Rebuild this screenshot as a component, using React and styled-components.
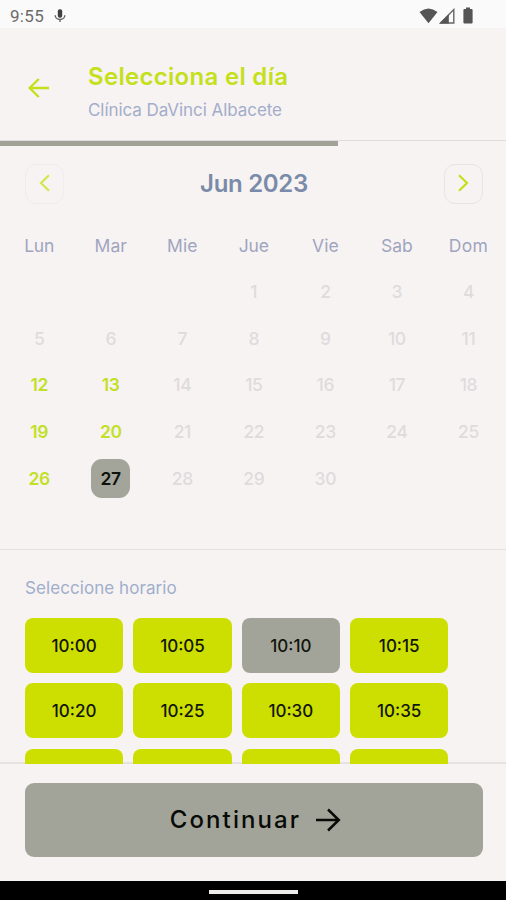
import React, { useState } from 'react';
import styled, { createGlobalStyle } from 'styled-components';

const WEEK_DAYS = [
  { label: 'Lun', spacing: -0.2 },
  { label: 'Mar', spacing: 0 },
  { label: 'Mie', spacing: 0.1 },
  { label: 'Jue', spacing: -0.1 },
  { label: 'Vie', spacing: 0 },
  { label: 'Sab', spacing: 0 },
  { label: 'Dom', spacing: 0.3 },
];
const FIRST_DAY_OFFSET = 3;
const DAYS = Array.from({ length: 30 }, (_, i) => i + 1);
const AVAILABLE_DAYS = [12, 13, 19, 20, 26, 27];
const TIMES = [
  '10:00',
  '10:05',
  '10:10',
  '10:15',
  '10:20',
  '10:25',
  '10:30',
  '10:35',
];
const NEXT_ROW = [0, 1, 2, 3];

const MicIcon = () => (
  <svg width="12" height="14" viewBox="0 0 12 14" fill="none">
    <rect x="3.8" y="0.3" width="4.4" height="8.4" rx="2" fill="#3f3f3f" />
    <path d="M1.2 6.2a4.8 4.3 0 0 0 9.6 0M6 10.5v2.6" stroke="#666" strokeWidth="1.4" />
  </svg>
);

const WifiIcon = () => (
  <svg width="19" height="16" viewBox="0 0 19 16">
    <path d="M0.5 4Q9.5-3 18.5 4L9.5 15.2Z" fill="#555" />
  </svg>
);

const SignalIcon = () => (
  <svg width="16" height="16" viewBox="0 0 16 16">
    <path d="M1.6 15 14.8 1.6V15Z" fill="none" stroke="#666" strokeWidth="1.4" />
    <path d="M0.3 15.6 9.8 6v9.6Z" fill="#555" />
  </svg>
);

const BatteryIcon = () => (
  <svg width="10" height="17" viewBox="0 0 10 17">
    <path d="M3 0.5h4V2h1.6q1 0 1 1v12.5q0 1-1 1H1.4q-1 0-1-1V3q0-1 1-1H3Z" fill="#555" />
  </svg>
);

const BackIcon = () => (
  <svg width="22" height="20" viewBox="0 0 22 20" fill="none">
    <path d="M21 10H1.8M10.8 1 1.6 10l9.2 9" stroke="#c4e01b" strokeWidth="2.4" />
  </svg>
);

const ChevronIcon = ({ next }) => (
  <svg width="12" height="18" viewBox="0 0 12 18" fill="none">
    <path
      d={next ? 'M2 1.2 10 9l-8 7.8' : 'M10 1.2 2 9l8 7.8'}
      stroke={next ? '#c2e018' : '#d0e74c'}
      strokeWidth="2.2"
    />
  </svg>
);

const ForwardIcon = () => (
  <svg width="26" height="24" viewBox="0 0 26 24" fill="none">
    <path d="M1 12h22.5M13 1.5 23.8 12 13 22.5" stroke="#080a05" strokeWidth="2.5" />
  </svg>
);

const App = () => {
  const [selectedDay, setSelectedDay] = useState(27);
  const [selectedTime, setSelectedTime] = useState('10:10');

  return (
    <Screen>
      <GlobalStyle />
      <StatusBar>
        <Clock>9:55</Clock>
        <MicIcon />
        <StatusIcons>
          <WifiIcon />
          <SignalIcon />
          <BatteryIcon />
        </StatusIcons>
      </StatusBar>
      <Header>
        <BackButton aria-label="Volver">
          <BackIcon />
        </BackButton>
        <HeaderText>
          <Title>Selecciona el día</Title>
          <Clinic>Clínica DaVinci Albacete</Clinic>
        </HeaderText>
      </Header>
      <ProgressTrack>
        <Progress />
      </ProgressTrack>
      <Calendar>
        <MonthBar>
          <MonthButton $faded aria-label="Mes anterior">
            <ChevronIcon />
          </MonthButton>
          <Month>Jun 2023</Month>
          <MonthButton aria-label="Mes siguiente">
            <ChevronIcon next />
          </MonthButton>
        </MonthBar>
        <WeekDays>
          {WEEK_DAYS.map(({ label, spacing }) => (
            <WeekDay key={label} $spacing={spacing}>
              {label}
            </WeekDay>
          ))}
        </WeekDays>
        <Days>
          {DAYS.map((day) => {
            const available = AVAILABLE_DAYS.includes(day);
            return (
              <Day
                key={day}
                $first={day === 1}
                $available={available}
                $selected={day === selectedDay}
                disabled={!available}
                onClick={() => setSelectedDay(day)}
              >
                {day}
              </Day>
            );
          })}
        </Days>
      </Calendar>
      <Schedule>
        <ScheduleTitle>Seleccione horario</ScheduleTitle>
        <Times>
          {TIMES.map((time) => (
            <Time
              key={time}
              $selected={time === selectedTime}
              onClick={() => setSelectedTime(time)}
            >
              {time}
            </Time>
          ))}
          {NEXT_ROW.map((slot) => (
            <Time key={slot} />
          ))}
        </Times>
      </Schedule>
      <Footer>
        <ContinueButton>
          <ContinueLabel>Continuar</ContinueLabel>
          <ForwardIcon />
        </ContinueButton>
      </Footer>
      <NavigationBar>
        <HomeHandle />
      </NavigationBar>
    </Screen>
  );
};

const GlobalStyle = createGlobalStyle`
  * {
    box-sizing: border-box;
  }

  body {
    margin: 0;
    background-color: #f7f3f3;
  }

  button {
    margin: 0;
    padding: 0;
    border: none;
    background: none;
    font-family: inherit;
  }
`;

const Screen = styled.div`
  display: flex;
  flex-direction: column;
  width: 506px;
  height: 900px;
  overflow: hidden;
  background-color: #f7f3f3;
  font-family: 'Inter', sans-serif;
`;

const StatusBar = styled.div`
  flex: none;
  display: flex;
  align-items: center;
  height: 28px;
  padding: 3px 33px 0 10px;
  background-color: #fafafa;
`;

const Clock = styled.span`
  width: 44px;
  font-family: 'Roboto', sans-serif;
  font-size: 17px;
  line-height: 20px;
  letter-spacing: 0.3px;
  color: #6b6b6b;
`;

const StatusIcons = styled.div`
  display: flex;
  align-items: center;
  margin-left: auto;

  svg + svg {
    margin-left: 1px;
  }

  svg:last-child {
    margin-left: 8px;
  }
`;

const Header = styled.header`
  flex: none;
  display: flex;
  height: 112px;
  padding: 34px 25px 0 28px;
`;

const BackButton = styled.button`
  display: flex;
  width: 60px;
  height: 20px;
  margin-top: 16px;
`;

const HeaderText = styled.div`
  display: flex;
  flex-direction: column;
  gap: 6px;
  white-space: nowrap;
`;

const Title = styled.h1`
  margin: 0;
  font-size: 24px;
  line-height: 30px;
  font-weight: 600;
  letter-spacing: 0.3px;
  color: #c4e01b;
`;

const Clinic = styled.span`
  font-size: 17px;
  line-height: 24px;
  letter-spacing: -0.06px;
  color: #a3adca;
`;

const ProgressTrack = styled.div`
  flex: none;
  height: 6px;
  border-top: 1px solid #dfdcdb;
`;

const Progress = styled.div`
  width: 338px;
  height: 5px;
  background-color: #a2a398;
`;

const Calendar = styled.section`
  flex: none;
  height: 404px;
  padding-top: 18px;
  border-bottom: 1px solid #e4e0e0;
`;

const MonthBar = styled.div`
  display: flex;
  justify-content: space-between;
  padding: 0 23px 0 25px;
`;

const MonthButton = styled.button`
  display: flex;
  justify-content: center;
  width: 39px;
  height: 40px;
  padding-top: 9px;
  border: 1px solid ${({ $faded }) => ($faded ? '#f0ecec' : '#e8e4e4')};
  border-radius: 11px;
`;

const Month = styled.h2`
  margin: 0;
  font-size: 24px;
  line-height: 40px;
  font-weight: 600;
  letter-spacing: -0.3px;
  color: #7a8ba9;
`;

const WeekDays = styled.div`
  display: grid;
  grid-template-columns: repeat(7, 71.55px);
  margin-top: 30px;
  padding-left: 3.4px;
`;

const WeekDay = styled.span`
  text-align: center;
  font-size: 17.5px;
  line-height: 24px;
  letter-spacing: ${({ $spacing }) => $spacing}px;
  color: #a0a5bf;
`;

const Days = styled.div`
  display: grid;
  grid-template-columns: repeat(7, 71.55px);
  grid-auto-rows: 46.75px;
  place-items: center;
  margin-top: 10.4px;
  padding-left: 3.4px;
`;

const Day = styled.button`
  ${({ $first }) => $first && `grid-column-start: ${FIRST_DAY_OFFSET + 1};`}
  width: 39px;
  height: 39px;
  border-radius: 11px;
  font-size: 17.5px;
  line-height: 38px;
  letter-spacing: -0.4px;
  font-weight: ${({ $available }) => ($available ? 600 : 500)};
  background-color: ${({ $selected }) => ($selected ? '#a3a49a' : 'transparent')};
  color: ${({ $selected, $available }) => {
    if ($selected) return '#10120c';
    return $available ? '#c3e029' : '#dfdbdd';
  }};
`;

const Schedule = styled.section`
  flex: none;
  height: 214px;
  padding: 27px 25px 0;
  overflow: hidden;
  box-shadow: inset 0 -2px #e6e2e2;
`;

const ScheduleTitle = styled.h3`
  margin: 0;
  font-size: 17px;
  line-height: 22px;
  font-weight: 400;
  letter-spacing: 0.07px;
  color: #a0aecb;
`;

const Times = styled.div`
  display: grid;
  grid-template-columns: repeat(4, 98.2px);
  grid-auto-rows: 55px;
  gap: 10.3px 10.2px;
  margin-top: 19px;
`;

const Time = styled.button`
  border-radius: 8px;
  font-size: 17px;
  font-weight: 500;
  color: #12150a;
  background-color: ${({ $selected }) => ($selected ? '#a2a49a' : '#cddf00')};
`;

const Footer = styled.footer`
  flex: none;
  height: 117px;
  padding: 19px 23px 0 25px;
`;

const ContinueButton = styled.button`
  display: flex;
  align-items: center;
  justify-content: center;
  gap: 14px;
  width: 100%;
  height: 74px;
  padding-left: 3px;
  border-radius: 9px;
  background-color: #a2a49a;
`;

const ContinueLabel = styled.span`
  font-size: 24px;
  line-height: 30px;
  font-weight: 500;
  letter-spacing: 2.1px;
  color: #080a05;
`;

const NavigationBar = styled.div`
  flex: none;
  display: flex;
  justify-content: center;
  height: 19px;
  padding-top: 9px;
  background-color: #000000;
`;

const HomeHandle = styled.div`
  width: 89px;
  height: 4px;
  background-color: #eeebeb;
`;

export default App;
